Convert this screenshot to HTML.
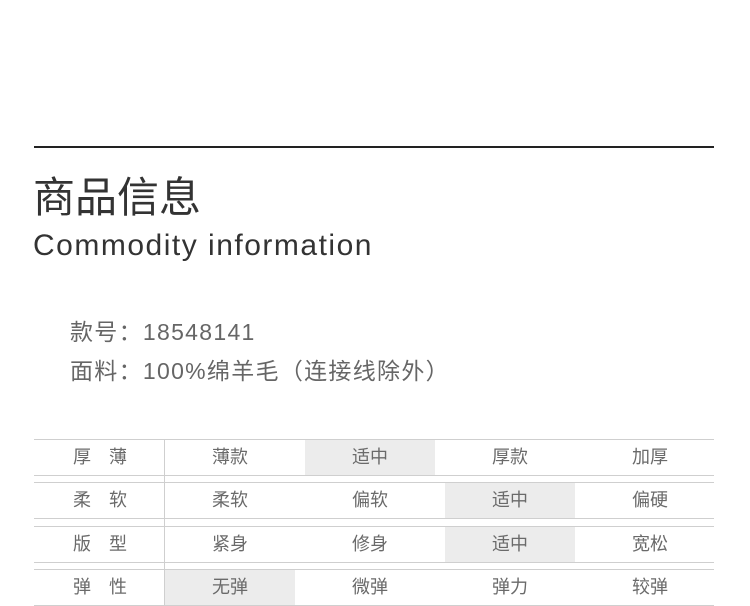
<!DOCTYPE html>
<html><head><meta charset="utf-8"><style>
body{margin:0;width:750px;height:606px;background:#fff;position:relative;overflow:hidden;font-family:"Liberation Sans","Noto Sans CJK SC",sans-serif}
.a{position:absolute;white-space:nowrap}
.hl{position:absolute;background:#ececec;height:35px}
.ln{position:absolute;left:34px;width:680px;height:1px;background:#cfcfcf}
.c{position:absolute;width:140px;text-align:center;font-size:18px;color:#6a6a6a;line-height:36px}
</style></head><body>
<div class="a" style="left:34px;top:146px;width:680px;height:2px;background:#222"></div>
<div class="a" style="left:33px;top:173px;font-size:42px;color:#333;line-height:50px">商品信息</div>
<div class="a" style="left:33px;top:228px;font-size:30px;color:#333;line-height:36px;letter-spacing:1.5px">Commodity information</div>
<div class="a" style="left:70px;top:316px;font-size:23px;color:#666;line-height:32px;letter-spacing:1.3px">款号：18548141</div>
<div class="a" style="left:70px;top:355px;font-size:23px;color:#666;line-height:32px;letter-spacing:1.3px">面料：100%绵羊毛（连接线除外）</div>

<div class="hl" style="left:305px;top:440px;width:130px"></div>
<div class="hl" style="left:445px;top:483px;width:130px"></div>
<div class="hl" style="left:445px;top:527px;width:130px"></div>
<div class="hl" style="left:165px;top:570px;width:130px"></div>

<div class="ln" style="top:439px"></div><div class="ln" style="top:475px"></div>
<div class="ln" style="top:482px"></div><div class="ln" style="top:518px"></div>
<div class="ln" style="top:526px"></div><div class="ln" style="top:562px"></div>
<div class="ln" style="top:569px"></div><div class="ln" style="top:605px"></div>
<div class="a" style="left:164px;top:439px;width:1px;height:167px;background:#cfcfcf"></div>

<div class="c" style="left:30px;top:439px">厚&emsp;薄</div>
<div class="c" style="left:160px;top:439px">薄款</div>
<div class="c" style="left:300px;top:439px">适中</div>
<div class="c" style="left:440px;top:439px">厚款</div>
<div class="c" style="left:580px;top:439px">加厚</div>

<div class="c" style="left:30px;top:482px">柔&emsp;软</div>
<div class="c" style="left:160px;top:482px">柔软</div>
<div class="c" style="left:300px;top:482px">偏软</div>
<div class="c" style="left:440px;top:482px">适中</div>
<div class="c" style="left:580px;top:482px">偏硬</div>

<div class="c" style="left:30px;top:526px">版&emsp;型</div>
<div class="c" style="left:160px;top:526px">紧身</div>
<div class="c" style="left:300px;top:526px">修身</div>
<div class="c" style="left:440px;top:526px">适中</div>
<div class="c" style="left:580px;top:526px">宽松</div>

<div class="c" style="left:30px;top:569px">弹&emsp;性</div>
<div class="c" style="left:160px;top:569px">无弹</div>
<div class="c" style="left:300px;top:569px">微弹</div>
<div class="c" style="left:440px;top:569px">弹力</div>
<div class="c" style="left:580px;top:569px">较弹</div>
</body></html>
